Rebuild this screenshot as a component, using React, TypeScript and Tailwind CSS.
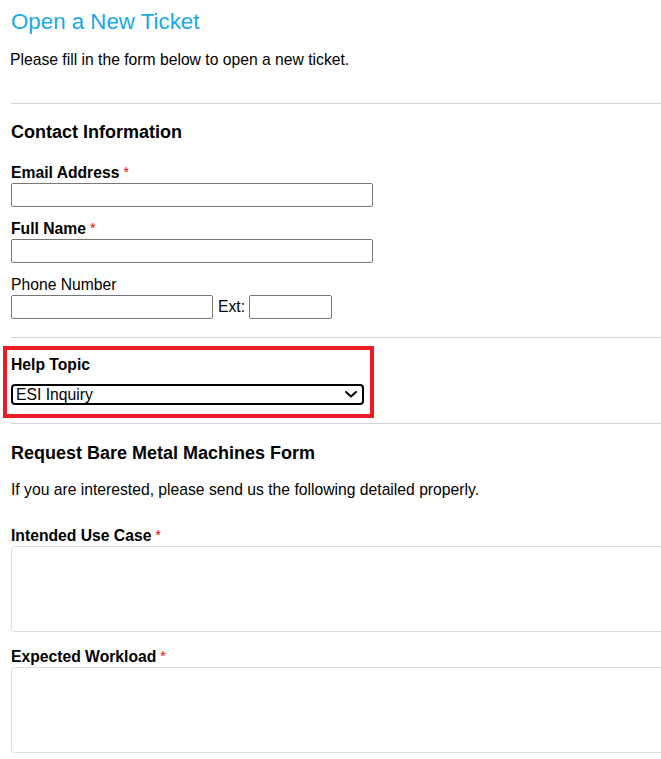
import * as React from 'react';

function Required(): React.JSX.Element {
  return <span className="ml-[4px] align-top text-[14px] font-normal leading-[18px] text-[#ee0000]">*</span>;
}

function Label({
  children,
  required = false,
  bold = true,
  className = '',
}: {
  children: React.ReactNode;
  required?: boolean;
  bold?: boolean;
  className?: string;
}): React.JSX.Element {
  return (
    <label className={`block text-[15.7px] leading-[20px] ${bold ? 'font-bold' : 'font-normal'} ${className}`}>
      {children}
      {required && <Required />}
    </label>
  );
}

function Divider({ className = '' }: { className?: string }): React.JSX.Element {
  return <div className={`h-px w-full bg-[#d2d2d2] ${className}`} />;
}

function TextInput({ className = '' }: { className?: string }): React.JSX.Element {
  return (
    <input
      type="text"
      className={`block h-[24px] rounded-[2px] border border-[#767676] bg-white px-[2px] outline-none ${className}`}
    />
  );
}

function ChevronDown(): React.JSX.Element {
  return (
    <svg width="12" height="7" viewBox="0 0 12 7" fill="none" aria-hidden="true">
      <path d="M1 1l5 4.5L11 1" stroke="#000" strokeWidth="2" strokeLinecap="round" strokeLinejoin="round" />
    </svg>
  );
}

export default function App(): React.JSX.Element {
  return (
    <div className="h-[759px] w-[661px] overflow-hidden bg-white text-black [font-family:'Liberation_Sans',Arial,sans-serif]">
      <div className="w-[720px] pl-[11px]">
        <h1 className="mt-[9px] text-[22.3px] leading-[26px] font-normal text-[#1ba9ea]">Open a New Ticket</h1>
        <p className="mt-[15px] -ml-px text-[15.7px] leading-[20px]">Please fill in the form below to open a new ticket.</p>

        <Divider className="mt-[33px]" />

        {/* Contact information */}
        <h2 className="mt-[17px] text-[18px] leading-[22px] font-bold">Contact Information</h2>

        <Label required className="mt-[20px]">Email Address</Label>
        <TextInput className="w-[362px]" />

        <Label required className="mt-[12px]">Full Name</Label>
        <TextInput className="w-[362px]" />

        <Label bold={false} className="mt-[12px]">Phone Number</Label>
        <div className="flex items-center">
          <TextInput className="w-[202px]" />
          <span className="ml-[5px] mr-[4px] text-[15.7px] leading-[20px]">Ext:</span>
          <TextInput className="w-[83px]" />
        </div>

        <Divider className="mt-[18px]" />

        {/* Help topic (highlighted) */}
        <div className="mt-[8px] -ml-[8px] w-[371px] border-4 border-[#ed1c24] pt-[5px] pb-[9px] pl-[4px]">
          <Label>Help Topic</Label>
          <div className="relative mt-[9px] w-[353px]">
            <select
              defaultValue="esi"
              className="block h-[21px] w-full appearance-none rounded-[4px] border-2 border-black bg-white pl-[3px] text-[15.7px] leading-[17px] outline-none"
            >
              <option value="esi">ESI Inquiry</option>
            </select>
            <span className="pointer-events-none absolute top-[7px] right-[7px] flex">
              <ChevronDown />
            </span>
          </div>
        </div>

        <Divider className="mt-[5px]" />

        {/* Request form */}
        <h2 className="mt-[18px] text-[18px] leading-[22px] font-bold">Request Bare Metal Machines Form</h2>
        <p className="mt-[16px] text-[15.7px] leading-[20px]">If you are interested, please send us the following detailed properly.</p>

        <Label required className="mt-[26px] leading-[19px]">Intended Use Case</Label>
        <textarea className="block h-[86px] w-[700px] resize-none rounded-[3px] border border-[#dedede] bg-white outline-none" />

        <Label required className="mt-[15px] leading-[19px]">Expected Workload</Label>
        <textarea className="block h-[86px] w-[700px] resize-none rounded-[3px] border border-[#dedede] bg-white outline-none" />
      </div>
    </div>
  );
}
